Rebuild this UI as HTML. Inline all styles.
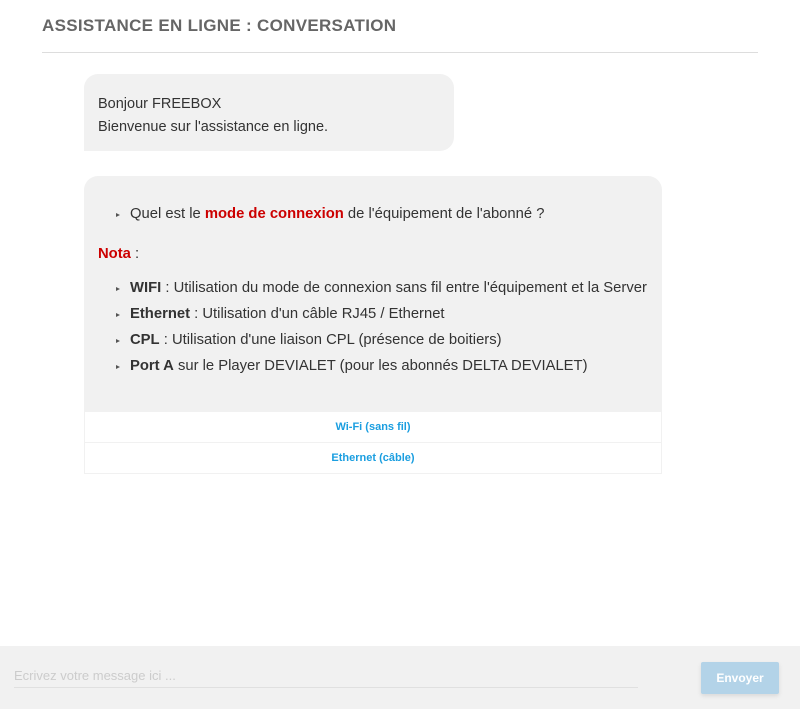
<!DOCTYPE html>
<html><head><meta charset="utf-8"><style>
body{margin:0;width:800px;height:709px;background:#fff;font-family:"Liberation Sans",sans-serif;color:#333;position:relative;overflow:hidden}
h1{position:absolute;left:42px;top:16px;margin:0;font-size:17px;font-weight:bold;color:#666;letter-spacing:.3px}
.hr{position:absolute;left:42px;top:52px;width:716px;height:1px;background:#ddd}
.b1{position:absolute;left:84px;top:74px;width:370px;height:77px;background:#f1f1f1;border-radius:14px 14px 14px 0;box-sizing:border-box;padding:19px 14px;font-size:14.5px;line-height:23px}
.b2{position:absolute;left:84px;top:176px;width:578px;height:298px;background:#f1f1f1;border-radius:14px 14px 0 0;font-size:14.8px}
.li{position:absolute;left:46px;white-space:nowrap}
.li:before{content:"";position:absolute;left:-14px;top:7px;border-left:4px solid #555;border-top:2px solid transparent;border-bottom:2px solid transparent}
.red{color:#c00;font-weight:bold}
.btn{position:absolute;left:1px;width:576px;height:30px;background:#fff;color:#1a9ee0;font-size:11px;font-weight:bold;text-align:center;line-height:30px}
.foot{position:absolute;left:0;top:646px;width:800px;height:63px;background:#f1f1f1}
.inp{position:absolute;left:14px;top:22px;width:624px;height:19px;border-bottom:1px solid #e0e0e0;color:#ccc;font-size:13px}
.send{position:absolute;left:701px;top:16px;width:78px;height:32px;background:#b3d3e8;border-radius:2px;color:#fff;font-size:12px;font-weight:bold;text-align:center;line-height:32px;box-shadow:0 2px 4px rgba(0,0,0,.1)}
</style></head><body>
<h1>ASSISTANCE EN LIGNE : CONVERSATION</h1>
<div class="hr"></div>
<div class="b1">Bonjour FREEBOX<br>Bienvenue sur l'assistance en ligne.</div>
<div class="b2">
<div class="li" style="top:30px">Quel est le <span class="red">mode de connexion</span> de l'équipement de l'abonné ?</div>
<div style="position:absolute;left:14px;top:70px"><span class="red">Nota</span> :</div>
<div class="li" style="top:104px"><b>WIFI</b> : Utilisation du mode de connexion sans fil entre l'équipement et la Server</div>
<div class="li" style="top:130px"><b>Ethernet</b> : Utilisation d'un câble RJ45 / Ethernet</div>
<div class="li" style="top:156px"><b>CPL</b> : Utilisation d'une liaison CPL (présence de boitiers)</div>
<div class="li" style="top:182px"><b>Port A</b> sur le Player DEVIALET (pour les abonnés DELTA DEVIALET)</div>
<div class="btn" style="top:236px">Wi-Fi (sans fil)</div>
<div class="btn" style="top:267px">Ethernet (câble)</div>
</div>
<div class="foot"><div class="inp">Ecrivez votre message ici ...</div><div class="send">Envoyer</div></div>
</body></html>
